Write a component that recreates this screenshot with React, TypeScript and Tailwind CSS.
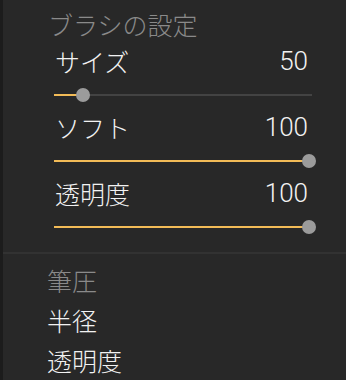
import React from "react";

const jp = "font-['Noto_Sans_CJK_JP',sans-serif] font-light";
const num = "font-['Roboto','Noto_Sans_CJK_JP',sans-serif] font-light";

// thumb center offset (px from track start) for each slider
const sliders = [
    { label: "サイズ", value: 50, pos: 29 },
    { label: "ソフト", value: 100, pos: 255 },
    { label: "透明度", value: 100, pos: 255 },
];

const Slider = ({ pos }: { pos: number }) => (
    <div className="relative h-[14px] w-[258px] flex items-center">
        <div className="h-[2px] w-full bg-[#434343]" />
        <div className="absolute left-0 top-[6px] h-[2px] bg-[#f2bb57]" style={{ width: pos }} />
        <div
            className="absolute top-0 h-[14px] w-[14px] rounded-full bg-[#9b9b9b]"
            style={{ left: pos - 7 }}
        />
    </div>
);

export default function App() {
    return (
        <div className="flex h-[380px] w-full bg-[#282828] overflow-hidden">
            <div className="w-[3px] shrink-0 bg-[#1c1c1c]" />
            <div className="flex flex-1 flex-col">
                {/* ブラシの設定 */}
                <div className="pt-[10px] pb-[18px]">
                    <div className={`${jp} pl-[45px] text-[25px] leading-[28px] text-[#8a8a8a]`}>ブラシの設定</div>
                    <div className="mt-[9px] flex flex-col pl-[51px]">
                        {sliders.map((s, i) => (
                            <div key={s.label} className={i > 0 ? "mt-[11px]" : ""}>
                                <div className="flex h-[28px] w-[254px] items-center justify-between">
                                    <span className={`${jp} pl-[1px] text-[25px] leading-[28px] text-[#f2f2f2]`}>{s.label}</span>
                                    <span className={`${num} text-[26px] leading-[28px] text-[#f2f2f2]`}>{s.value}</span>
                                </div>
                                <div className="mt-[13px]">
                                    <Slider pos={s.pos} />
                                </div>
                            </div>
                        ))}
                    </div>
                </div>
                <div className="h-[4px] bg-[#323232]" />
                {/* 筆圧 */}
                <div className={`${jp} pt-[6px] pl-[44px] text-[25px] leading-[40px]`}>
                    <div className="text-[#8a8a8a]">筆圧</div>
                    <div className="text-[#f2f2f2]">半径</div>
                    <div className="text-[#f2f2f2]">透明度</div>
                </div>
            </div>
        </div>
    );
}
